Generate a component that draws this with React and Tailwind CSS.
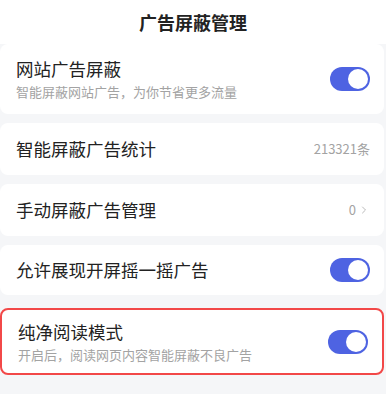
import { ChevronRight } from 'lucide-react';

const font = { fontFamily: '"Noto Sans CJK SC", "Noto Sans", sans-serif' };

function Toggle() {
  return (
    <div className="flex h-[24px] w-[40px] items-center justify-end rounded-full bg-[#4e63e2] p-[2px]">
      <div className="h-[20px] w-[20px] rounded-full bg-white" />
    </div>
  );
}

function Row({ title, sub, right, className = '' }) {
  return (
    <div className={`mr-[2px] flex items-center justify-between rounded-[8px] bg-white pl-[16px] pr-[14px] ${className}`}>
      <div className="flex flex-col">
        <span className="text-[17.5px] leading-[24px] text-[#222]">{title}</span>
        {sub && <span className="mt-[2px] text-[13px] leading-[18px] text-[#a3a3a3]">{sub}</span>}
      </div>
      {right}
    </div>
  );
}

export default function App() {
  return (
    <div className="min-h-[394px] w-[386px] bg-[#f5f6f8] pb-[20px]" style={font}>
      <div className="flex h-[44px] items-center justify-center bg-white text-[18px] font-bold text-[#222]">
        广告屏蔽管理
      </div>
      <div className="flex flex-col gap-[9px]">
        <Row className="h-[70px]" title="网站广告屏蔽" sub="智能屏蔽网站广告，为你节省更多流量" right={<Toggle />} />
        <Row
          className="h-[52px]"
          title="智能屏蔽广告统计"
          right={<span className="text-[13px] text-[#a3a3a3]">213321条</span>}
        />
        <Row
          className="h-[52px]"
          title="手动屏蔽广告管理"
          right={
            <span className="flex items-center text-[13px] text-[#a3a3a3]">
              0
              <ChevronRight className="ml-[2px] h-[12px] w-[12px]" strokeWidth={1.5} />
            </span>
          }
        />
        <Row className="h-[50px]" title="允许展现开屏摇一摇广告" right={<Toggle />} />
      </div>
      <div className="mt-[13px]">
        <Row
          className="h-[67px] border-[2.5px] border-[#f24848] pl-[13.5px] pr-[12px]"
          title="纯净阅读模式"
          sub="开启后，阅读网页内容智能屏蔽不良广告"
          right={<Toggle />}
        />
      </div>
    </div>
  );
}
